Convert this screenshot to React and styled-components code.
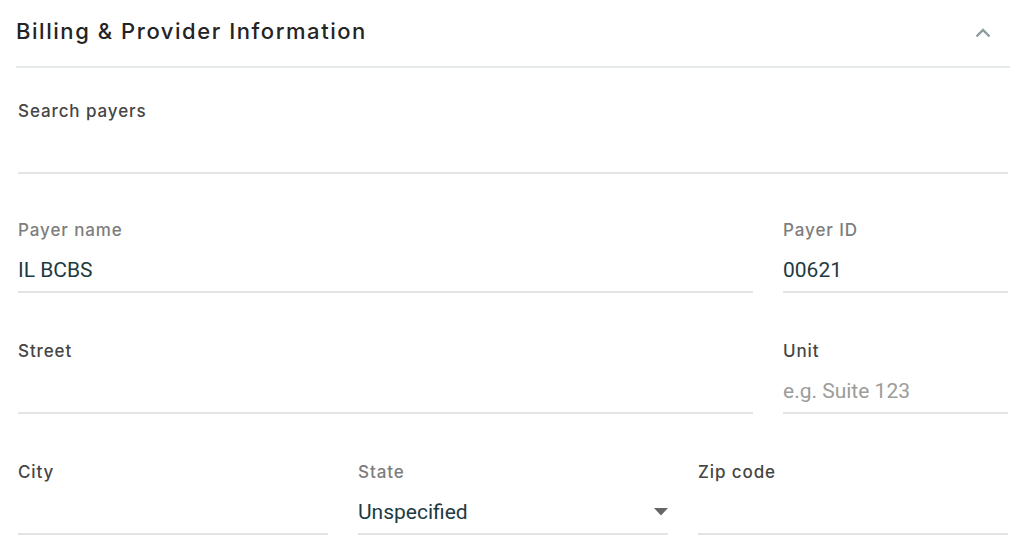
import styled, { createGlobalStyle } from 'styled-components';

const GlobalStyle = createGlobalStyle`
  html, body {
    margin: 0;
    padding: 0;
    background: #ffffff;
  }
  body {
    font-family: Inter, "Open Sans", sans-serif;
    -webkit-font-smoothing: antialiased;
  }
`;

const Section = styled.section`
  width: 1024px;
  box-sizing: border-box;
  padding: 0 14px 0 16px;
`;

const Header = styled.header`
  height: 66px;
  display: flex;
  align-items: center;
  justify-content: space-between;
  border-bottom: 2px solid #e8ebeb;
`;

const Title = styled.h2`
  margin: 0;
  font-family: Inter, "Open Sans", sans-serif;
  font-size: 22px;
  font-weight: 500;
  color: #242424;
  letter-spacing: 1.55px;
  padding-bottom: 4px;
`;

const CollapseButton = styled.button`
  border: none;
  background: none;
  padding: 0;
  margin-right: 19px;
  width: 16px;
  height: 10px;
  display: flex;
  cursor: pointer;
`;

const Form = styled.div`
  padding: 31px 2px 0;
`;

const Row = styled.div`
  display: grid;
  grid-template-columns: ${(p) => p.$cols};
  column-gap: 30px;
  margin-top: ${(p) => p.$top || 0}px;
`;

const Field = styled.label`
  display: flex;
  flex-direction: column;
  min-width: 0;
`;

const Label = styled.span`
  height: 24px;
  line-height: 24px;
  font-size: 17px;
  font-weight: 500;
  letter-spacing: 0.9px;
  color: ${(p) => (p.$filled ? '#7d7d7d' : '#454545')};
`;

const InputWrap = styled.div`
  position: relative;
  margin-top: 6px;
  height: 43px;
  border-bottom: 2px solid #e4e4e4;
  display: flex;
  align-items: center;
`;

const Input = styled.input`
  flex: 1;
  min-width: 0;
  border: none;
  outline: none;
  padding: 0;
  background: transparent;
  font-family: Roboto, "Liberation Sans", sans-serif;
  font-size: 21px;
  color: #1d3a42;

  &::placeholder {
    color: #9c9c9c;
  }
`;

const Select = styled.div`
  flex: 1;
  font-family: Roboto, "Liberation Sans", sans-serif;
  font-size: 21px;
  color: #1d3a42;
  cursor: pointer;
`;

const Caret = styled.svg`
  position: absolute;
  right: 0;
  top: 18px;
`;

function TextField({ label, value, placeholder }) {
  return (
    <Field>
      <Label $filled={!!value}>{label}</Label>
      <InputWrap>
        <Input defaultValue={value} placeholder={placeholder} />
      </InputWrap>
    </Field>
  );
}

function SelectField({ label, value }) {
  return (
    <Field as="div">
      <Label $filled>{label}</Label>
      <InputWrap>
        <Select>{value}</Select>
        <Caret width="14" height="8" viewBox="0 0 14 8">
          <path d="M0 0h14L7 7.5z" fill="#666" />
        </Caret>
      </InputWrap>
    </Field>
  );
}

export default function App() {
  return (
    <>
      <GlobalStyle />
      <Section>
        <Header>
          <Title>Billing &amp; Provider Information</Title>
          <CollapseButton aria-label="Collapse">
            <svg width="16" height="10" viewBox="0 0 16 10">
              <path d="M1.5 8.5L8 2l6.5 6.5" fill="none" stroke="#8c9c9f" strokeWidth="2.4" />
            </svg>
          </CollapseButton>
        </Header>
        <Form>
          <Row $cols="1fr">
            <TextField label="Search payers" />
          </Row>
          <Row $cols="1fr 225px" $top={44}>
            <TextField label="Payer name" value="IL BCBS" />
            <TextField label="Payer ID" value="00621" />
          </Row>
          <Row $cols="1fr 225px" $top={46}>
            <TextField label="Street" />
            <TextField label="Unit" placeholder="e.g. Suite 123" />
          </Row>
          <Row $cols="1fr 1fr 1fr" $top={46}>
            <TextField label="City" />
            <SelectField label="State" value="Unspecified" />
            <TextField label="Zip code" />
          </Row>
        </Form>
      </Section>
    </>
  );
}
